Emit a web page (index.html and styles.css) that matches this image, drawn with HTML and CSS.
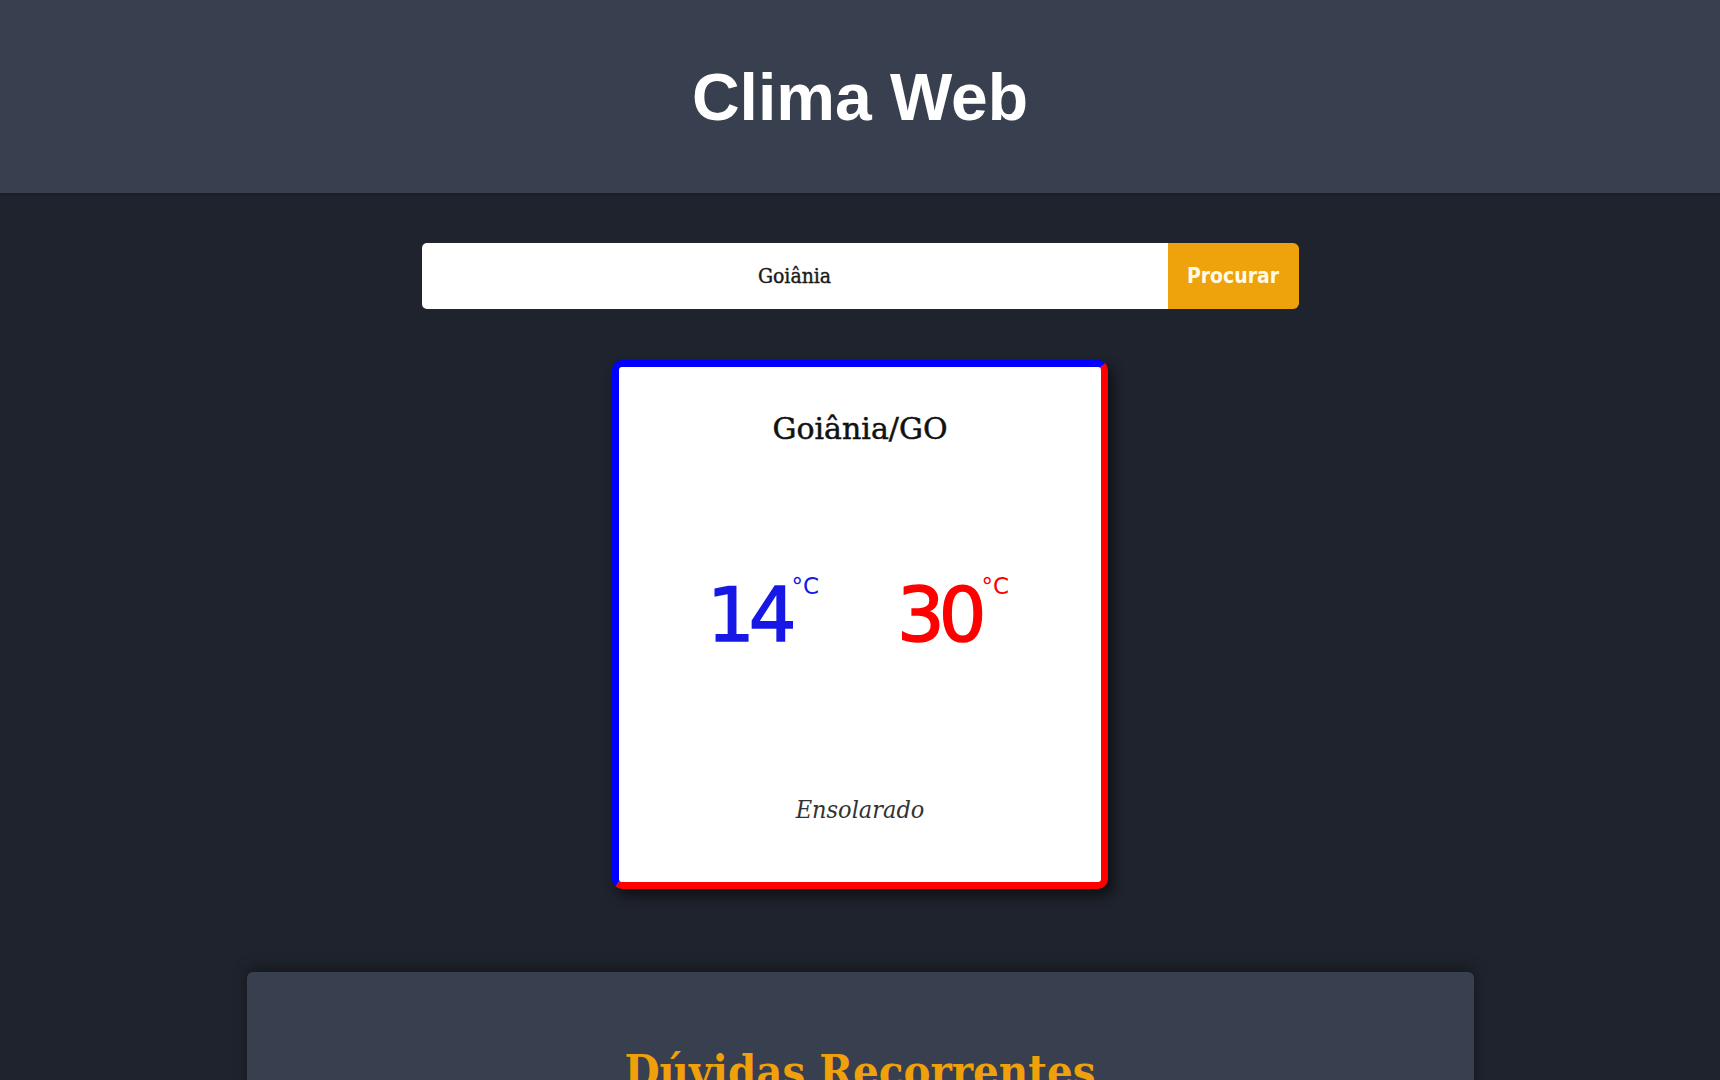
FILE: index.html
```html
<!DOCTYPE html>
<html lang="pt-BR">
<head>
<meta charset="utf-8">
<title>Clima Web</title>
<link rel="stylesheet" href="styles.css">
</head>
<body>
<header class="topbar">
  <h1 class="brand">Clima Web</h1>
</header>
<main class="content">
  <form class="search">
    <input class="search-input" type="text" value="Goiânia">
    <button class="search-btn" type="button">Procurar</button>
  </form>
  <section class="card">
    <h2 class="city">Goiânia/GO</h2>
    <div class="temps">
      <div class="temp temp-min"><span class="num">14</span><span class="unit">°C</span></div>
      <div class="temp temp-max"><span class="num">30</span><span class="unit">°C</span></div>
    </div>
    <p class="cond">Ensolarado</p>
  </section>
  <section class="faq">
    <h2 class="faq-title">Dúvidas Recorrentes</h2>
  </section>
</main>
</body>
</html>
```
FILE: styles.css
```css
* { box-sizing: border-box; }
html, body { margin: 0; padding: 0; }
body {
  background: #1f232d;
  font-family: "DejaVu Serif", serif;
  overflow: hidden;
  height: 1080px;
}
.topbar {
  background: #383f4f;
  height: 193px;
  display: flex;
  align-items: center;
  justify-content: center;
  box-shadow: 0 1px 3px rgba(0, 0, 0, 0.3);
}
.brand {
  margin: 0;
  color: #ffffff;
  font-family: "Liberation Sans", Arial, sans-serif;
  font-weight: 700;
  font-size: 66px;
  line-height: 1;
}
.content {
  display: flex;
  flex-direction: column;
  align-items: center;
  padding-top: 50px;
}
.search {
  display: flex;
  width: 877px;
  height: 66px;
  margin: 0;
}
.search-input {
  flex: 1;
  border: none;
  outline: none;
  background: #ffffff;
  border-radius: 5px 0 0 5px;
  text-align: center;
  font-family: "DejaVu Serif Condensed", "DejaVu Serif", serif;
  font-size: 21px;
  color: #1a1a1a;
  -webkit-text-stroke: 0.4px #1a1a1a;
  padding: 0 10px;
}
.search-btn {
  width: 131px;
  border: none;
  background: #eea20b;
  color: #fffbe8;
  border-radius: 0 6px 6px 0;
  font-family: "DejaVu Sans Condensed", "DejaVu Sans", sans-serif;
  font-weight: 700;
  font-size: 21px;
  padding: 0;
}
.card {
  margin-top: 51px;
  width: 496px;
  height: 529px;
  background: #ffffff;
  border: 7px solid;
  border-color: #0000ff #ff0000 #ff0000 #0000ff;
  border-radius: 10px;
  box-shadow: 5px 7px 12px rgba(0, 0, 0, 0.55);
  display: flex;
  flex-direction: column;
  justify-content: space-between;
  align-items: center;
  padding: 44px 0 57px;
}
.city {
  margin: 0;
  font-family: "DejaVu Serif", serif;
  font-weight: 400;
  font-size: 30px;
  line-height: 36px;
  color: #111111;
  -webkit-text-stroke: 0.5px #111111;
}
.temps {
  display: flex;
  gap: 78px;
  height: 77px;
  margin-left: -4px;
  margin-bottom: 12px;
}
.temp {
  display: flex;
  align-items: flex-start;
  font-family: "DejaVu Sans", sans-serif;
}
.num {
  font-size: 75px;
  line-height: 77px;
  letter-spacing: -6px;
  -webkit-text-stroke: 1.5px currentColor;
}
.unit {
  font-size: 23px;
  line-height: 1;
  margin-top: -2px;
  margin-left: 1px;
}
.temp-min { color: #1717e6; }
.temp-max { color: #ff0000; }
.cond {
  margin: 0;
  font-family: "DejaVu Serif Condensed", "DejaVu Serif", serif;
  font-style: italic;
  font-size: 25px;
  line-height: 30px;
  color: #333333;
}
.faq {
  margin-top: 83px;
  width: 1227px;
  min-height: 320px;
  background: #383f4f;
  border-radius: 6px;
  box-shadow: 0 -4px 14px rgba(0, 0, 0, 0.35);
  padding-top: 73px;
  text-align: center;
}
.faq-title {
  margin: 0;
  font-family: "DejaVu Serif Condensed", "DejaVu Serif", serif;
  font-weight: 700;
  font-size: 45px;
  line-height: 1.2;
  color: #f0a00a;
}
```
